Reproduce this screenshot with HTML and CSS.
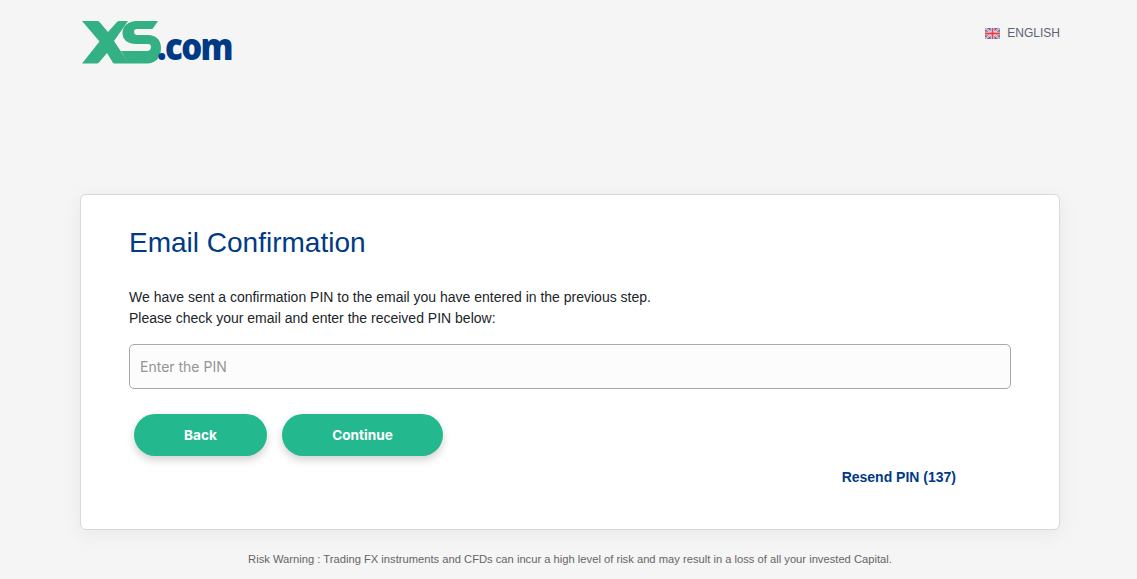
FILE: index.html
```html
<!DOCTYPE html>
<html lang="en">
<head>
<meta charset="utf-8">
<title>Email Confirmation</title>
<link rel="stylesheet" href="styles.css">
</head>
<body>
<div class="page">
  <header class="header">
    <a class="logo" href="#">
      <svg class="logo-mark" width="80" height="43" viewBox="0 0 80 43" aria-hidden="true">
        <path d="M1 0H16C17 0 18 .5 18.500 1L27 11L36 1C36.500 .5 37.500 0 38.500 0H47L33 20L48 42.500H34C33 42.500 32 42 31.500 41L26 32L18 41.500C17.500 42 16.500 42.500 15.500 42.500H1L18.500 20.500Z" fill="#34b085"/>
        <path d="M77 0H56C47 0 41.500 5 41.500 12C41.500 19 47 23 55 23H67C69 23 70 24 70 26C70 28.500 68.500 30 66 30H40L47.500 42.500H66C75 42.500 80 36 80 27C80 19 75 14 67 14H56C54 14 53 12.500 53 11C53 9 54 8 56 8H71.500Z" fill="#34b085"/>
      </svg>
      <span class="logo-com">.com</span>
    </a>
    <div class="lang">
      <svg class="flag" width="15" height="11" viewBox="0 0 15 11" aria-hidden="true">
        <rect width="15" height="11" fill="#5b66a8"/>
        <path d="M0 0L15 11M15 0L0 11" stroke="#f0dfe4" stroke-width="2"/>
        <path d="M0 0L15 11M15 0L0 11" stroke="#d9606f" stroke-width=".7"/>
        <path d="M7.500 0V11M0 5.500H15" stroke="#f4eef0" stroke-width="3.600"/>
        <path d="M7.500 0V11M0 5.500H15" stroke="#e2404f" stroke-width="1.800"/>
      </svg>
      <span>ENGLISH</span>
    </div>
  </header>

  <main class="card">
    <h1 class="title">Email Confirmation</h1>
    <p class="intro">We have sent a confirmation PIN to the email you have entered in the previous step.<br>Please check your email and enter the received PIN below:</p>
    <input class="pin" type="text" placeholder="Enter the PIN">
    <div class="actions">
      <button class="btn btn-back" type="button">Back</button>
      <button class="btn btn-continue" type="button">Continue</button>
    </div>
    <div class="resend-row"><a class="resend" href="#">Resend PIN (137)</a></div>
  </main>

  <footer class="footer">Risk Warning : Trading FX instruments and CFDs can incur a high level of risk and may result in a loss of all your invested Capital.</footer>
</div>
</body>
</html>
```
FILE: styles.css
```css
* { box-sizing: border-box; }
html, body { margin: 0; height: 100%; }
body {
  background: #f5f5f5;
  font-family: "Liberation Sans", Arial, sans-serif;
  overflow: hidden;
}
.page {
  width: 980px;
  margin-left: 80px;
}
.header {
  height: 194px;
  display: flex;
  justify-content: space-between;
  align-items: flex-start;
}
.logo {
  display: flex;
  align-items: flex-start;
  padding-top: 21px;
  margin-left: 1px;
  text-decoration: none;
}
.logo-mark { display: block; }
.logo-com {
  margin: 11px 0 0 -4px;
  font: 800 33px/32px "Open Sans", sans-serif;
  letter-spacing: -1.600px;
  color: #003a85;
  transform: scaleY(1.12);
  transform-origin: left bottom;
}
.lang {
  display: flex;
  align-items: center;
  gap: 7px;
  padding-top: 26px;
  font-size: 12px;
  line-height: 14px;
  color: #5c6474;
}
.flag { display: block; }
.card {
  height: 336px;
  padding: 31px 48px 0 48px;
  background: #fff;
  border: 1px solid #d8d8e2;
  border-radius: 6px;
  box-shadow: 0 4px 20px rgba(0, 0, 0, .06);
}
.title {
  margin: 0;
  font-size: 28px;
  line-height: 34px;
  font-weight: 400;
  color: #003a85;
}
.intro {
  margin: 27px 0 0;
  font-size: 14px;
  line-height: 21px;
  color: #212529;
}
.pin {
  display: block;
  width: 100%;
  height: 45px;
  margin-top: 15px;
  padding: 0 10px;
  background: #fcfcfc;
  border: 1px solid #a8a8a8;
  border-radius: 5px;
  font: 400 14px "Inter", sans-serif;
  outline: none;
}
.pin::placeholder { color: #949494; opacity: 1; }
.actions {
  display: flex;
  gap: 15px;
  margin: 25px 0 0 5px;
}
.btn {
  height: 42px;
  border: 0;
  border-radius: 21px;
  background: #23b88e;
  color: #fff;
  font: 700 13.600px "Inter", sans-serif;
  box-shadow: 0 4px 8px rgba(0, 0, 0, .18);
}
.btn-back { width: 133px; }
.btn-continue { width: 161px; }
.resend-row {
  display: flex;
  justify-content: flex-end;
  margin-top: 13px;
  padding-right: 55px;
}
.resend {
  font-size: 14px;
  line-height: 16px;
  font-weight: 700;
  color: #003a85;
  text-decoration: none;
}
.footer {
  margin-top: 23px;
  text-align: center;
  font-size: 11.200px;
  line-height: 13px;
  color: #666;
}
```
